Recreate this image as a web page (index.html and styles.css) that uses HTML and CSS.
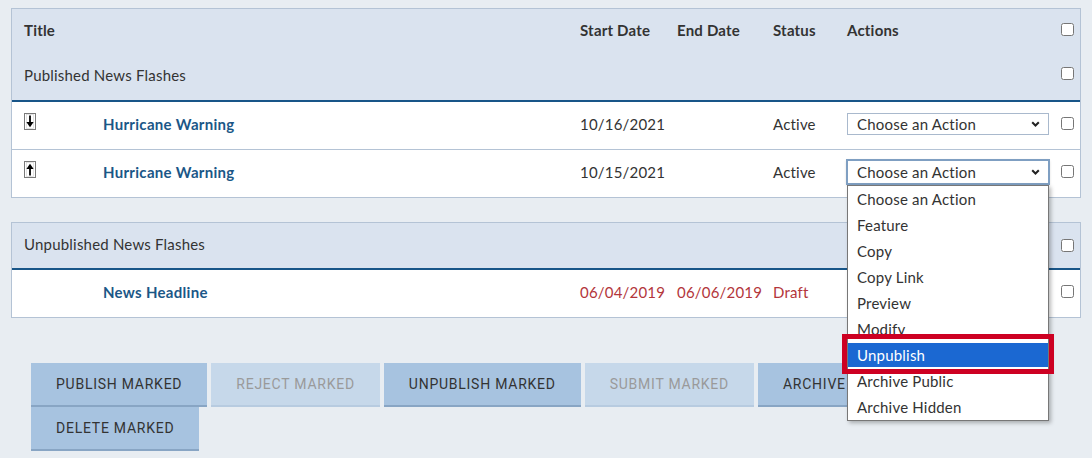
FILE: index.html
```html
<!DOCTYPE html>
<html>
<head>
<meta charset="utf-8">
<link rel="stylesheet" href="styles.css">
</head>
<body>
<div class="page">
  <div class="tbl">
    <div class="thead">
      <div class="grid hrow1">
        <div class="span2 th">Title</div>
        <div class="th">Start Date</div>
        <div class="th">End Date</div>
        <div class="th">Status</div>
        <div class="th">Actions</div>
        <input type="checkbox" class="cb">
      </div>
      <div class="grid hrow2">
        <div class="span6 group">Published News Flashes</div>
        <input type="checkbox" class="cb">
      </div>
    </div>
    <div class="grid row">
      <div class="icon">
        <svg width="12" height="17" viewBox="0 0 12 17"><rect x="0.5" y="0.5" width="11" height="16" fill="#fff" stroke="#7a7a7a"/><rect x="2.5" y="1.5" width="7" height="14" fill="none" stroke="#d0d0d0" stroke-width="0.6"/><path d="M6 2.5v7" stroke="#000" stroke-width="1.8"/><path d="M2.4 9h7.2L6 14.2z" fill="#000"/></svg>
      </div>
      <a class="title">Hurricane Warning</a>
      <div class="cell">10/16/2021</div>
      <div class="cell"></div>
      <div class="cell">Active</div>
      <div class="sel">Choose an Action<svg class="chev" width="9" height="6" viewBox="0 0 9 6"><path d="M1.2 1.2l3.3 3.3 3.3-3.3" stroke="#222" stroke-width="2" fill="none"/></svg></div>
      <input type="checkbox" class="cb">
    </div>
    <div class="grid row last">
      <div class="icon">
        <svg width="12" height="17" viewBox="0 0 12 17"><rect x="0.5" y="0.5" width="11" height="16" fill="#fff" stroke="#7a7a7a"/><rect x="2.5" y="1.5" width="7" height="14" fill="none" stroke="#d0d0d0" stroke-width="0.6"/><path d="M6 7.5v7" stroke="#000" stroke-width="1.8"/><path d="M2.4 8h7.2L6 2.8z" fill="#000"/></svg>
      </div>
      <a class="title">Hurricane Warning</a>
      <div class="cell">10/15/2021</div>
      <div class="cell"></div>
      <div class="cell">Active</div>
      <div class="selwrap">
        <div class="sel focus">Choose an Action<svg class="chev" width="9" height="6" viewBox="0 0 9 6"><path d="M1.2 1.2l3.3 3.3 3.3-3.3" stroke="#222" stroke-width="2" fill="none"/></svg></div>
        <ul class="menu">
          <li>Choose an Action</li>
          <li>Feature</li>
          <li>Copy</li>
          <li>Copy Link</li>
          <li>Preview</li>
          <li>Modify</li>
          <li class="hi">Unpublish</li>
          <li>Archive Public</li>
          <li>Archive Hidden</li>
        </ul>
        <div class="redbox"></div>
      </div>
      <input type="checkbox" class="cb">
    </div>
  </div>

  <div class="tbl second">
    <div class="thead">
      <div class="grid hrow3">
        <div class="span6 group">Unpublished News Flashes</div>
        <input type="checkbox" class="cb">
      </div>
    </div>
    <div class="grid row last">
      <div class="icon"></div>
      <a class="title">News Headline</a>
      <div class="cell red">06/04/2019</div>
      <div class="cell red">06/06/2019</div>
      <div class="cell red">Draft</div>
      <div class="cell"></div>
      <input type="checkbox" class="cb">
    </div>
  </div>

  <div class="buttons">
    <button class="btn">Publish Marked</button>
    <button class="btn dis">Reject Marked</button>
    <button class="btn">Unpublish Marked</button>
    <button class="btn dis">Submit Marked</button>
    <button class="btn">Archive Marked</button>
    <button class="btn">Delete Marked</button>
  </div>
</div>
</body>
</html>
```
FILE: styles.css
```css
* { box-sizing: border-box; }
html, body { margin: 0; padding: 0; }
body {
  background: #e8edf2;
  font-family: Lato, "Liberation Sans", sans-serif;
  font-size: 15px;
  letter-spacing: 0.2px;
  color: #333;
}
.page { padding: 8px 11px 0 11px; }
.tbl {
  border: 1px solid #b4c3d5;
  background: #fff;
}
.second { margin-top: 24px; }
.thead {
  background: #dae3ef;
  border-bottom: 2px solid #185588;
}
.grid {
  display: grid;
  grid-template-columns: 79px 1fr 97px 96px 74px 214px 13px;
  align-items: center;
  padding: 0 6px 0 12px;
}
.hrow1 { height: 42px; }
.hrow2 { height: 49px; padding-bottom: 2px; }
.hrow3 { height: 45px; padding-bottom: 3px; }
.span2 { grid-column: span 2; }
.span6 { grid-column: span 6; }
.th { font-weight: 700; }
.group { font-weight: 400; }
.thead .cb { top: -1px; }
.hrow3 .cb { top: 1px; }
.row {
  height: 48px;
  padding-bottom: 4px;
  border-bottom: 1px solid #b4c3d5;
}
.row.last { height: 47px; border-bottom: 0; }
.icon { height: 17px; display: flex; align-items: flex-start; margin-top: -5px; }
.icon svg { display: block; }
.title {
  color: #1b5787;
  font-weight: 700;
  text-decoration: none;
  letter-spacing: 0.3px;
}
.red { color: #b3363b; }
.cb {
  width: 13px;
  height: 13px;
  margin: 0;
  position: relative;
  top: 0;
}
.sel {
  width: 202px;
  height: 22px;
  border: 1px solid #a9b9cd;
  background: #fff;
  padding-left: 9px;
  padding-right: 8px;
  display: flex;
  align-items: center;
  justify-content: space-between;
  line-height: 20px;
}
.sel.focus {
  border-color: #7f9fc2;
  outline: 1px solid #7f9fc2;
  height: 24px;
  box-shadow: 0 1px 3px rgba(0,0,0,0.25);
}
.chev { display: block; }
.selwrap { position: relative; height: 24px; }
.menu {
  position: absolute;
  left: 0;
  top: 25px;
  width: 202px;
  margin: 0;
  padding: 0;
  list-style: none;
  background: #fff;
  border: 1px solid #777;
  box-shadow: 2px 2px 4px rgba(0,0,0,0.28);
  z-index: 5;
}
.menu li {
  height: 26px;
  line-height: 26px;
  padding-left: 9px;
  color: #333;
}
.menu li.hi {
  background: #1b68d2;
  color: #fff;
  box-shadow: inset 0 1px 0 #fff, inset 0 -1px 0 #fff;
}
.redbox {
  position: absolute;
  left: -5px;
  top: 174px;
  width: 212px;
  height: 40px;
  border: 5px solid #cd0022;
  z-index: 6;
}
.buttons {
  display: flex;
  flex-wrap: wrap;
  column-gap: 4px;
  row-gap: 0;
  margin-top: 45px;
  padding-left: 20px;
  width: 1060px;
}
.btn {
  height: 44px;
  padding: 0 25px;
  border: 0;
  border-bottom: 2px solid #88a5c4;
  background: #a7c3e0;
  color: #333;
  font-family: Roboto, "Liberation Sans", sans-serif;
  font-size: 14px;
  letter-spacing: 0.75px;
  text-transform: uppercase;
}
.btn.dis {
  background: #c6d8ea;
  border-bottom-color: #b7cbe0;
  color: #9a9a9a;
}
```
